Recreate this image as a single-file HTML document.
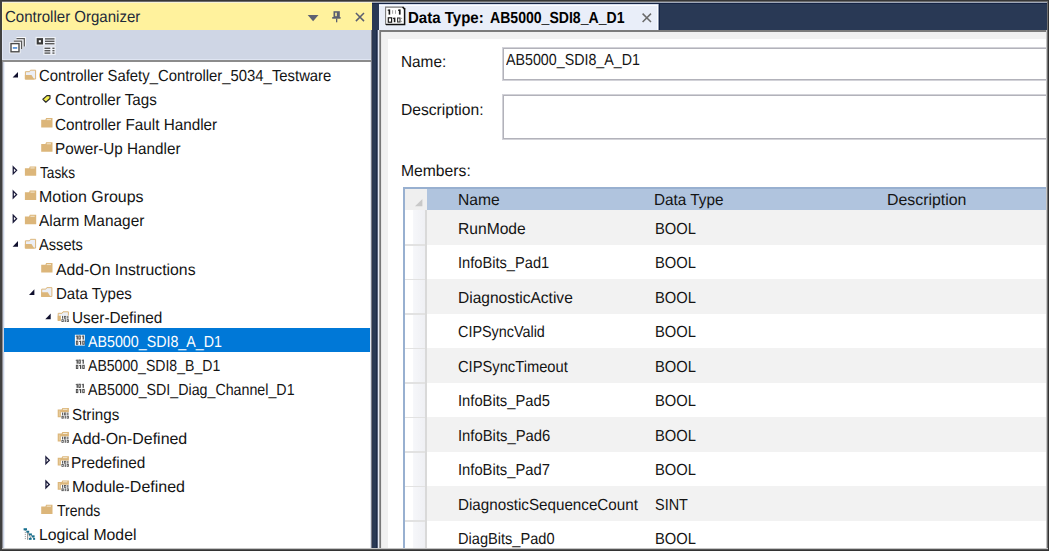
<!DOCTYPE html>
<html><head><meta charset="utf-8">
<style>
*{margin:0;padding:0;box-sizing:border-box}
html,body{width:1049px;height:551px;overflow:hidden;background:#2e2e2e}
body{position:relative;font-family:"Liberation Sans",sans-serif;font-size:15px;color:#1e1e1e}
.abs{position:absolute}
.tx{position:absolute;white-space:pre;line-height:1;transform-origin:0 0;text-rendering:geometricPrecision;font-family:"Liberation Sans",sans-serif}
</style></head><body>
<!-- left panel: title -->
<div class="abs" style="left:2px;top:2px;width:370px;height:1px;background:#f6f2d8"></div>
<div class="abs" style="left:2px;top:3px;width:370px;height:27px;background:#fff29d"></div>
<svg class="abs" style="left:0;top:0" width="372" height="60" viewBox="0 0 372 60">
 <path d="M307.7 15H318.5L313.1 21.2z" fill="#5d6172"/>
 <rect x="333.5" y="11.2" width="6.3" height="6.2" fill="#5b5f70"/>
 <rect x="335.2" y="12.7" width="1.6" height="3.5" fill="#fff29d"/>
 <rect x="332.2" y="17" width="8.4" height="1.7" fill="#5b5f70"/>
 <rect x="336" y="18.5" width="1.3" height="3.8" fill="#5b5f70"/>
 <path d="M355.9 13L364 21.1M364 13L355.9 21.1" stroke="#5b5f70" stroke-width="1.5"/>
</svg>
<!-- toolbar -->
<div class="abs" style="left:2px;top:30px;width:370px;height:29px;background:#cfd6e5"></div>
<div class="abs" style="left:2px;top:59px;width:370px;height:1px;background:#dfe5f2"></div>
<div class="abs" style="left:2px;top:60px;width:370px;height:2px;background:#8c8c8c"></div>
<svg class="abs" style="left:0;top:30px" width="62" height="30" viewBox="0 30 62 30">
 <g fill="none" stroke="#fff" stroke-width="3" opacity="0.9"><path d="M16.5 38.6H24.3V46.4"/><path d="M13.8 41.2H21.6V49"/><rect x="11" y="43.6" width="8" height="8.2"/></g>
 <path d="M16.5 38.6H24.3V46.4" fill="none" stroke="#5a5a5a" stroke-width="1.3"/>
 <path d="M13.8 41.2H21.6V49" fill="none" stroke="#5a5a5a" stroke-width="1.3"/>
 <rect x="11" y="43.6" width="8" height="8.2" fill="#fff" stroke="#4a4a4a" stroke-width="1.4"/>
 <rect x="12.8" y="47.2" width="4.4" height="1.5" fill="#3a7fd0"/>
 <g fill="none" stroke="#eef1f7" stroke-width="2.4"><rect x="36.7" y="38.1" width="6.3" height="6.4"/><rect x="45" y="38.2" width="9.5" height="6.2"/><rect x="44.5" y="47.6" width="10" height="6.2"/></g>
 <rect x="36.7" y="38.1" width="6.3" height="6.4" fill="#eef1f7"/><rect x="45" y="38.2" width="9.5" height="6.2" fill="#eef1f7"/><rect x="44.5" y="47.6" width="10" height="6.2" fill="#eef1f7"/>
 <rect x="36.7" y="38.1" width="6.3" height="6.4" fill="#3a3a3a"/>
 <rect x="38.8" y="40.2" width="2.1" height="2.1" fill="#fff"/>
 <g fill="#5a5a5a">
  <rect x="45" y="38.2" width="9.5" height="1.4"/><rect x="45" y="40.6" width="9.5" height="1.4"/><rect x="45" y="43" width="9.5" height="1.4"/>
  <rect x="44.5" y="47.6" width="5.8" height="1.4"/><rect x="52.4" y="47.6" width="2.1" height="1.4"/>
  <rect x="44.5" y="50" width="5.8" height="1.4"/><rect x="52.4" y="50" width="2.1" height="1.4"/>
  <rect x="44.5" y="52.4" width="5.8" height="1.4"/><rect x="52.4" y="52.4" width="2.1" height="1.4"/>
 </g>
</svg>
<!-- tree -->
<div class="abs" style="left:2px;top:62px;width:369px;height:487px;background:#fff"></div>
<div class="abs" style="left:4px;top:328px;width:366px;height:24px;background:#0078d7"></div>
<svg class="abs" style="left:0;top:0" width="372" height="551" viewBox="0 0 372 551"><path d="M18.00 71.90V77.60H12.60z" fill="#10102e"/><path d="M25.40 79.00V71.70H29.50L30.50 70.20H35.60V79.00z" fill="#eceff6" stroke="#dcb67a" stroke-width="1"/><path d="M24.90 74.90H31.50L34.30 79.50H24.90z" fill="#dcb67a"/><path d="M46.90 95.66L50.00 95.66L50.00 98.46L45.80 102.26L42.90 99.26z" fill="#f6f04e" stroke="#2c2c2c" stroke-width="1.15" stroke-linejoin="round"/><path d="M41.20 119.82H45.40L46.10 118.12H52.50V127.52H41.20z" fill="#dcb67a"/><rect x="46.70" y="119.12" width="4.3" height="1" fill="#f3e8d2"/><path d="M41.20 143.98H45.40L46.10 142.28H52.50V151.68H41.20z" fill="#dcb67a"/><rect x="46.70" y="143.28" width="4.3" height="1" fill="#f3e8d2"/><path d="M13.25 166.94L16.60 170.34L13.25 173.74z" fill="none" stroke="#1a1a3a" stroke-width="1.3" stroke-linejoin="miter"/><path d="M24.90 168.14H29.10L29.80 166.44H36.20V175.84H24.90z" fill="#dcb67a"/><rect x="30.40" y="167.44" width="4.3" height="1" fill="#f3e8d2"/><path d="M13.25 191.10L16.60 194.50L13.25 197.90z" fill="none" stroke="#1a1a3a" stroke-width="1.3" stroke-linejoin="miter"/><path d="M24.90 192.30H29.10L29.80 190.60H36.20V200.00H24.90z" fill="#dcb67a"/><rect x="30.40" y="191.60" width="4.3" height="1" fill="#f3e8d2"/><path d="M13.25 215.26L16.60 218.66L13.25 222.06z" fill="none" stroke="#1a1a3a" stroke-width="1.3" stroke-linejoin="miter"/><path d="M24.90 216.46H29.10L29.80 214.76H36.20V224.16H24.90z" fill="#dcb67a"/><rect x="30.40" y="215.76" width="4.3" height="1" fill="#f3e8d2"/><path d="M18.00 241.02V246.72H12.60z" fill="#10102e"/><path d="M25.40 248.12V240.82H29.50L30.50 239.32H35.60V248.12z" fill="#eceff6" stroke="#dcb67a" stroke-width="1"/><path d="M24.90 244.02H31.50L34.30 248.62H24.90z" fill="#dcb67a"/><path d="M41.20 264.78H45.40L46.10 263.08H52.50V272.48H41.20z" fill="#dcb67a"/><rect x="46.70" y="264.08" width="4.3" height="1" fill="#f3e8d2"/><path d="M34.40 289.34V295.04H29.00z" fill="#10102e"/><path d="M41.70 296.44V289.14H45.80L46.80 287.64H51.90V296.44z" fill="#eceff6" stroke="#dcb67a" stroke-width="1"/><path d="M41.20 292.34H47.80L50.60 296.94H41.20z" fill="#dcb67a"/><path d="M50.70 313.50V319.20H45.30z" fill="#10102e"/><path d="M58.20 320.30V313.30H62.10L63.00 311.80H68.40V316.30" fill="#eceff6" stroke="#dcb67a" stroke-width="1"/><path d="M57.70 315.80H61.20V320.80L58.90 321.10H57.70z" fill="#dcb67a"/><rect x="60.90" y="315.60" width="8.2" height="6.6" fill="#fff"/><rect x="62.10" y="315.90" width="1.1" height="2.8" fill="#505050"/><rect x="64.50" y="316.30" width="1.4" height="2.0" fill="none" stroke="#505050" stroke-width="0.8"/><rect x="67.30" y="315.90" width="1.1" height="2.8" fill="#505050"/><rect x="61.90" y="319.60" width="1.4" height="2.0" fill="none" stroke="#505050" stroke-width="0.8"/><rect x="64.70" y="319.20" width="1.1" height="2.8" fill="#505050"/><rect x="67.10" y="319.60" width="1.4" height="2.0" fill="none" stroke="#505050" stroke-width="0.8"/><rect x="74.9" y="334.76" width="9.9" height="10.8" fill="#fff"/><rect x="76.60" y="335.46" width="1.25" height="4.1" fill="#484848"/><rect x="75.80" y="335.66" width="0.9" height="1.1" fill="#484848"/><rect x="78.85" y="335.91" width="1.45" height="3.2" fill="none" stroke="#484848" stroke-width="0.95"/><rect x="82.60" y="335.46" width="1.25" height="4.1" fill="#484848"/><rect x="81.80" y="335.66" width="0.9" height="1.1" fill="#484848"/><rect x="76.35" y="341.11" width="1.45" height="3.2" fill="none" stroke="#484848" stroke-width="0.95"/><rect x="80.00" y="340.66" width="1.25" height="4.1" fill="#484848"/><rect x="79.20" y="340.86" width="0.9" height="1.1" fill="#484848"/><rect x="82.75" y="341.11" width="1.45" height="3.2" fill="none" stroke="#484848" stroke-width="0.95"/><rect x="76.60" y="359.62" width="1.25" height="4.1" fill="#484848"/><rect x="75.80" y="359.82" width="0.9" height="1.1" fill="#484848"/><rect x="78.85" y="360.07" width="1.45" height="3.2" fill="none" stroke="#484848" stroke-width="0.95"/><rect x="82.60" y="359.62" width="1.25" height="4.1" fill="#484848"/><rect x="81.80" y="359.82" width="0.9" height="1.1" fill="#484848"/><rect x="76.35" y="365.27" width="1.45" height="3.2" fill="none" stroke="#484848" stroke-width="0.95"/><rect x="80.00" y="364.82" width="1.25" height="4.1" fill="#484848"/><rect x="79.20" y="365.02" width="0.9" height="1.1" fill="#484848"/><rect x="82.75" y="365.27" width="1.45" height="3.2" fill="none" stroke="#484848" stroke-width="0.95"/><rect x="76.60" y="383.78" width="1.25" height="4.1" fill="#484848"/><rect x="75.80" y="383.98" width="0.9" height="1.1" fill="#484848"/><rect x="78.85" y="384.23" width="1.45" height="3.2" fill="none" stroke="#484848" stroke-width="0.95"/><rect x="82.60" y="383.78" width="1.25" height="4.1" fill="#484848"/><rect x="81.80" y="383.98" width="0.9" height="1.1" fill="#484848"/><rect x="76.35" y="389.43" width="1.45" height="3.2" fill="none" stroke="#484848" stroke-width="0.95"/><rect x="80.00" y="388.98" width="1.25" height="4.1" fill="#484848"/><rect x="79.20" y="389.18" width="0.9" height="1.1" fill="#484848"/><rect x="82.75" y="389.43" width="1.45" height="3.2" fill="none" stroke="#484848" stroke-width="0.95"/><path d="M57.70 409.44H61.60L62.40 407.94H68.90V417.24H57.70z" fill="#dcb67a"/><rect x="62.90" y="408.84" width="4.5" height="1" fill="#f3e8d2"/><rect x="58.80" y="410.54" width="1.4" height="5.6" fill="#e6cb9c"/><rect x="60.90" y="412.24" width="8.2" height="6.6" fill="#fff"/><rect x="62.10" y="412.54" width="1.1" height="2.8" fill="#505050"/><rect x="64.50" y="412.94" width="1.4" height="2.0" fill="none" stroke="#505050" stroke-width="0.8"/><rect x="67.30" y="412.54" width="1.1" height="2.8" fill="#505050"/><rect x="61.90" y="416.24" width="1.4" height="2.0" fill="none" stroke="#505050" stroke-width="0.8"/><rect x="64.70" y="415.84" width="1.1" height="2.8" fill="#505050"/><rect x="67.10" y="416.24" width="1.4" height="2.0" fill="none" stroke="#505050" stroke-width="0.8"/><path d="M57.70 433.60H61.60L62.40 432.10H68.90V441.40H57.70z" fill="#dcb67a"/><rect x="62.90" y="433.00" width="4.5" height="1" fill="#f3e8d2"/><rect x="58.80" y="434.70" width="1.4" height="5.6" fill="#e6cb9c"/><rect x="60.90" y="436.40" width="8.2" height="6.6" fill="#fff"/><rect x="62.10" y="436.70" width="1.1" height="2.8" fill="#505050"/><rect x="64.50" y="437.10" width="1.4" height="2.0" fill="none" stroke="#505050" stroke-width="0.8"/><rect x="67.30" y="436.70" width="1.1" height="2.8" fill="#505050"/><rect x="61.90" y="440.40" width="1.4" height="2.0" fill="none" stroke="#505050" stroke-width="0.8"/><rect x="64.70" y="440.00" width="1.1" height="2.8" fill="#505050"/><rect x="67.10" y="440.40" width="1.4" height="2.0" fill="none" stroke="#505050" stroke-width="0.8"/><path d="M45.95 456.86L49.30 460.26L45.95 463.66z" fill="none" stroke="#1a1a3a" stroke-width="1.3" stroke-linejoin="miter"/><path d="M57.70 457.76H61.60L62.40 456.26H68.90V465.56H57.70z" fill="#dcb67a"/><rect x="62.90" y="457.16" width="4.5" height="1" fill="#f3e8d2"/><rect x="58.80" y="458.86" width="1.4" height="5.6" fill="#e6cb9c"/><rect x="60.90" y="460.56" width="8.2" height="6.6" fill="#fff"/><rect x="62.10" y="460.86" width="1.1" height="2.8" fill="#505050"/><rect x="64.50" y="461.26" width="1.4" height="2.0" fill="none" stroke="#505050" stroke-width="0.8"/><rect x="67.30" y="460.86" width="1.1" height="2.8" fill="#505050"/><rect x="61.90" y="464.56" width="1.4" height="2.0" fill="none" stroke="#505050" stroke-width="0.8"/><rect x="64.70" y="464.16" width="1.1" height="2.8" fill="#505050"/><rect x="67.10" y="464.56" width="1.4" height="2.0" fill="none" stroke="#505050" stroke-width="0.8"/><path d="M45.95 481.02L49.30 484.42L45.95 487.82z" fill="none" stroke="#1a1a3a" stroke-width="1.3" stroke-linejoin="miter"/><path d="M57.70 481.92H61.60L62.40 480.42H68.90V489.72H57.70z" fill="#dcb67a"/><rect x="62.90" y="481.32" width="4.5" height="1" fill="#f3e8d2"/><rect x="58.80" y="483.02" width="1.4" height="5.6" fill="#e6cb9c"/><rect x="60.90" y="484.72" width="8.2" height="6.6" fill="#fff"/><rect x="62.10" y="485.02" width="1.1" height="2.8" fill="#505050"/><rect x="64.50" y="485.42" width="1.4" height="2.0" fill="none" stroke="#505050" stroke-width="0.8"/><rect x="67.30" y="485.02" width="1.1" height="2.8" fill="#505050"/><rect x="61.90" y="488.72" width="1.4" height="2.0" fill="none" stroke="#505050" stroke-width="0.8"/><rect x="64.70" y="488.32" width="1.1" height="2.8" fill="#505050"/><rect x="67.10" y="488.72" width="1.4" height="2.0" fill="none" stroke="#505050" stroke-width="0.8"/><path d="M41.20 506.38H45.40L46.10 504.68H52.50V514.08H41.20z" fill="#dcb67a"/><rect x="46.70" y="505.68" width="4.3" height="1" fill="#f3e8d2"/><path d="M25.3 530.04V540.04" stroke="#8a8a8a" stroke-width="0.9" stroke-dasharray="1.1 0.9"/><rect x="27.00" y="531.54" width="1.20" height="8.30" fill="#9a9a9a"/><path d="M28 532.04L31 538.54M31 535.00L34 538.54" stroke="#8a8a8a" stroke-width="0.9"/><rect x="23.60" y="528.24" width="3.40" height="2.10" fill="#17708f"/><rect x="26.30" y="530.74" width="2.90" height="1.90" fill="#17708f"/><rect x="28.80" y="533.44" width="3.10" height="1.90" fill="#17708f"/><rect x="31.70" y="535.34" width="2.90" height="2.00" fill="#17708f"/><rect x="28.90" y="537.84" width="2.70" height="2.00" fill="#17708f"/><rect x="33.10" y="537.84" width="2.00" height="2.00" fill="#17708f"/></svg>
<!-- navy -->
<div class="abs" style="left:372px;top:2px;width:675px;height:547px;background:#293955"></div>
<div class="abs" style="left:372px;top:2px;width:675px;height:1px;background:#a0a8b8"></div>
<div class="abs" style="left:372px;top:3px;width:675px;height:1px;background:#152444"></div>
<div class="abs" style="left:370px;top:62px;width:1px;height:487px;background:#dfe5f2"></div>
<div class="abs" style="left:371px;top:30px;width:1px;height:519px;background:#7a7d88"></div>
<div class="abs" style="left:372px;top:30px;width:1px;height:519px;background:#2a3650"></div>
<div class="abs" style="left:376px;top:30px;width:1px;height:519px;background:#1d2b4a"></div>
<div class="abs" style="left:377px;top:30px;width:1px;height:519px;background:#56627a"></div>
<div class="abs" style="left:659px;top:4px;width:1px;height:26px;background:#152444"></div>
<!-- tab -->
<div class="abs" style="left:379px;top:4px;width:279px;height:26px;background:#e9eef9"></div>
<div class="abs" style="left:379px;top:4px;width:279px;height:1px;background:#d8e0f0"></div>
<div class="abs" style="left:379px;top:5px;width:279px;height:1px;background:#fbfcff"></div>
<div class="abs" style="left:657px;top:5px;width:1px;height:25px;background:#fbfcff"></div>
<div class="abs" style="left:658px;top:4px;width:1px;height:26px;background:#8f9ab0"></div>
<svg class="abs" style="left:380px;top:4px" width="30" height="26" viewBox="380 4 30 26">
 <rect x="385.6" y="7" width="19" height="18" fill="#fff"/>
 <path d="M385.6 25V7.1H403.3" fill="none" stroke="#7a7a7a" stroke-width="1.1"/>
 <path d="M386 24.6H404.6V8.6" fill="none" stroke="#111" stroke-width="1.5"/>
 <path d="M402.6 7L405 9.4" stroke="#111" stroke-width="1.6"/>
 <g fill="#1a1a1a">
  <rect x="388.6" y="9.4" width="1.6" height="5.2"/><rect x="387.7" y="9.6" width="1.2" height="1.2"/>
  <rect x="398.9" y="9.4" width="1.7" height="5.2"/><rect x="398" y="9.6" width="1.2" height="1.2"/>
  <rect x="388.3" y="17.8" width="3.3" height="4.4" fill="none" stroke="#1a1a1a" stroke-width="1.2"/>
  <rect x="393.8" y="17.6" width="1.6" height="4.6"/><rect x="392.9" y="17.8" width="1.1" height="1.1"/>
  <rect x="397.6" y="18" width="2.4" height="4" fill="none" stroke="#333" stroke-width="1.1"/>
 </g>
 <g fill="#9a9a9a">
  <rect x="392.2" y="10.2" width="0.9" height="3.6"/><rect x="395" y="10.2" width="0.9" height="3.6"/>
  <rect x="401.2" y="17.8" width="0.9" height="1.2"/><rect x="401.2" y="20.8" width="0.9" height="1.3"/>
 </g>
</svg>
<svg class="abs" style="left:636px;top:8px" width="20" height="20" viewBox="636 8 20 20">
 <path d="M642.6 13.6L651 22M651 13.6L642.6 22" stroke="#6a6a6a" stroke-width="1.5"/>
</svg>
<!-- content -->
<div class="abs" style="left:378px;top:30px;width:1px;height:519px;background:#e4e9f7"></div>
<div class="abs" style="left:379px;top:30px;width:668px;height:2px;background:#7c7c7c"></div>
<div class="abs" style="left:379px;top:30px;width:1px;height:519px;background:#9a9a9a"></div><div class="abs" style="left:380px;top:30px;width:1px;height:519px;background:#787878"></div><div class="abs" style="left:381px;top:32px;width:1px;height:517px;background:#e8e8e8"></div>
<div class="abs" style="left:382px;top:32px;width:665px;height:517px;background:#f1f1f1"></div>
<div class="abs" style="left:388px;top:39px;width:659px;height:510px;background:#fff"></div>
<div class="abs" style="left:502px;top:46.5px;width:560px;height:34.5px;border:1px solid #d2d2d8;box-shadow:inset 0 0 0 1px #b2b2ba;background:#fff"></div>
<div class="abs" style="left:502px;top:93.7px;width:560px;height:46.3px;border:1px solid #d2d2d8;box-shadow:inset 0 0 0 1px #b2b2ba;background:#fff"></div>
<!-- grid -->
<div class="abs" style="left:403px;top:187px;width:644px;height:1.5px;background:#98b0d0"></div>
<div class="abs" style="left:403px;top:187px;width:1.5px;height:362px;background:#98b0d0"></div>
<div class="abs" style="left:404.5px;top:188.5px;width:22.5px;height:21.6px;background:#efefef"></div>
<svg class="abs" style="left:404px;top:188px" width="23" height="23" viewBox="404 188 23 23"><path d="M422.4 199V206.2H415z" fill="#c8c8c8"/></svg>
<div class="abs" style="left:427px;top:188.5px;width:620px;height:21.6px;background:#b0c4de"></div>
<div class="abs" style="left:404.5px;top:210.3px;width:8.5px;height:338.7px;background:#fff"></div>
<div class="abs" style="left:413px;top:210.3px;width:12px;height:338.7px;background:linear-gradient(90deg,#f6f7fa,#eff0f4)"></div>
<div class="abs" style="left:425px;top:210.3px;width:2px;height:338.7px;background:#d9d9d9"></div>
<div class="abs" style="left:427px;top:210.10px;width:620px;height:34.5px;background:#f2f2f2"></div>
<div class="abs" style="left:404.5px;top:244.10px;width:20.5px;height:1.6px;background:#e2e2e2"></div>
<div class="abs" style="left:427px;top:244.60px;width:620px;height:34.5px;background:#ffffff"></div>
<div class="abs" style="left:404.5px;top:278.60px;width:20.5px;height:1.6px;background:#e2e2e2"></div>
<div class="abs" style="left:427px;top:279.10px;width:620px;height:34.5px;background:#f2f2f2"></div>
<div class="abs" style="left:404.5px;top:313.10px;width:20.5px;height:1.6px;background:#e2e2e2"></div>
<div class="abs" style="left:427px;top:313.60px;width:620px;height:34.5px;background:#ffffff"></div>
<div class="abs" style="left:404.5px;top:347.60px;width:20.5px;height:1.6px;background:#e2e2e2"></div>
<div class="abs" style="left:427px;top:348.10px;width:620px;height:34.5px;background:#f2f2f2"></div>
<div class="abs" style="left:404.5px;top:382.10px;width:20.5px;height:1.6px;background:#e2e2e2"></div>
<div class="abs" style="left:427px;top:382.60px;width:620px;height:34.5px;background:#ffffff"></div>
<div class="abs" style="left:404.5px;top:416.60px;width:20.5px;height:1.6px;background:#e2e2e2"></div>
<div class="abs" style="left:427px;top:417.10px;width:620px;height:34.5px;background:#f2f2f2"></div>
<div class="abs" style="left:404.5px;top:451.10px;width:20.5px;height:1.6px;background:#e2e2e2"></div>
<div class="abs" style="left:427px;top:451.60px;width:620px;height:34.5px;background:#ffffff"></div>
<div class="abs" style="left:404.5px;top:485.60px;width:20.5px;height:1.6px;background:#e2e2e2"></div>
<div class="abs" style="left:427px;top:486.10px;width:620px;height:34.5px;background:#f2f2f2"></div>
<div class="abs" style="left:404.5px;top:520.10px;width:20.5px;height:1.6px;background:#e2e2e2"></div>
<div class="abs" style="left:427px;top:520.60px;width:620px;height:34.5px;background:#ffffff"></div>
<div class="abs" style="left:404.5px;top:554.60px;width:20.5px;height:1.6px;background:#e2e2e2"></div>
<div id="t0" class="tx" style="left:4.51px;top:10.00px;font-size:16px;font-weight:400;color:#1e2a3a;transform:scaleX(0.9390)">Controller Organizer</div>
<div id="t1" class="tx" style="left:38.51px;top:69.30px;font-size:16px;font-weight:400;color:#141414;transform:scaleX(0.9285)">Controller Safety_Controller_5034_Testware</div>
<div id="t2" class="tx" style="left:55.47px;top:93.46px;font-size:16px;font-weight:400;color:#141414;transform:scaleX(0.9481)">Controller Tags</div>
<div id="t3" class="tx" style="left:55.49px;top:117.62px;font-size:16px;font-weight:400;color:#141414;transform:scaleX(0.9545)">Controller Fault Handler</div>
<div id="t4" class="tx" style="left:55.35px;top:141.78px;font-size:16px;font-weight:400;color:#141414;transform:scaleX(0.9537)">Power-Up Handler</div>
<div id="t5" class="tx" style="left:39.76px;top:165.94px;font-size:16px;font-weight:400;color:#141414;transform:scaleX(0.8553)">Tasks</div>
<div id="t6" class="tx" style="left:39.02px;top:190.10px;font-size:16px;font-weight:400;color:#141414;transform:scaleX(0.9966)">Motion Groups</div>
<div id="t7" class="tx" style="left:39.20px;top:214.26px;font-size:16px;font-weight:400;color:#141414;transform:scaleX(0.9633)">Alarm Manager</div>
<div id="t8" class="tx" style="left:39.39px;top:238.42px;font-size:16px;font-weight:400;color:#141414;transform:scaleX(0.9148)">Assets</div>
<div id="t9" class="tx" style="left:56.17px;top:262.58px;font-size:16px;font-weight:400;color:#141414;transform:scaleX(0.9868)">Add-On Instructions</div>
<div id="t10" class="tx" style="left:55.50px;top:286.74px;font-size:16px;font-weight:400;color:#141414;transform:scaleX(0.9404)">Data Types</div>
<div id="t11" class="tx" style="left:71.97px;top:310.90px;font-size:16px;font-weight:400;color:#141414;transform:scaleX(0.9588)">User-Defined</div>
<div id="t12" class="tx" style="left:88.39px;top:335.06px;font-size:16px;font-weight:400;color:#ffffff;transform:scaleX(0.8910)">AB5000_SDI8_A_D1</div>
<div id="t13" class="tx" style="left:88.38px;top:359.22px;font-size:16px;font-weight:400;color:#141414;transform:scaleX(0.8796)">AB5000_SDI8_B_D1</div>
<div id="t14" class="tx" style="left:88.39px;top:383.38px;font-size:16px;font-weight:400;color:#141414;transform:scaleX(0.8897)">AB5000_SDI_Diag_Channel_D1</div>
<div id="t15" class="tx" style="left:72.10px;top:407.54px;font-size:16px;font-weight:400;color:#141414;transform:scaleX(0.9501)">Strings</div>
<div id="t16" class="tx" style="left:72.17px;top:431.70px;font-size:16px;font-weight:400;color:#141414;transform:scaleX(0.9967)">Add-On-Defined</div>
<div id="t17" class="tx" style="left:71.34px;top:455.86px;font-size:16px;font-weight:400;color:#141414;transform:scaleX(0.9610)">Predefined</div>
<div id="t18" class="tx" style="left:71.88px;top:480.02px;font-size:16px;font-weight:400;color:#141414;transform:scaleX(1.0003)">Module-Defined</div>
<div id="t19" class="tx" style="left:56.60px;top:504.18px;font-size:16px;font-weight:400;color:#141414;transform:scaleX(0.8784)">Trends</div>
<div id="t20" class="tx" style="left:39.02px;top:528.34px;font-size:16px;font-weight:400;color:#141414;transform:scaleX(0.9867)">Logical Model</div>
<div id="t21" class="tx" style="left:408.32px;top:10.60px;font-size:16px;font-weight:700;color:#000000;transform:scaleX(0.9385)">Data Type:</div>
<div id="t22" class="tx" style="left:490.18px;top:10.60px;font-size:16px;font-weight:700;color:#000000;transform:scaleX(0.8790)">AB5000_SDI8_A_D1</div>
<div id="t23" class="tx" style="left:401.33px;top:54.50px;font-size:16px;font-weight:400;color:#141414;transform:scaleX(0.9589)">Name:</div>
<div id="t24" class="tx" style="left:401.21px;top:102.60px;font-size:16px;font-weight:400;color:#141414;transform:scaleX(0.9769)">Description:</div>
<div id="t25" class="tx" style="left:401.13px;top:164.00px;font-size:16px;font-weight:400;color:#141414;transform:scaleX(0.9806)">Members:</div>
<div id="t26" class="tx" style="left:506.39px;top:52.80px;font-size:16px;font-weight:400;color:#141414;transform:scaleX(0.8910)">AB5000_SDI8_A_D1</div>
<div id="t27" class="tx" style="left:458.07px;top:193.30px;font-size:16px;font-weight:400;color:#141414;transform:scaleX(0.9784)">Name</div>
<div id="t28" class="tx" style="left:654.35px;top:193.30px;font-size:16px;font-weight:400;color:#141414;transform:scaleX(0.9574)">Data Type</div>
<div id="t29" class="tx" style="left:887.02px;top:193.30px;font-size:16px;font-weight:400;color:#141414;transform:scaleX(0.9927)">Description</div>
<div id="t30" class="tx" style="left:458.22px;top:221.80px;font-size:16px;font-weight:400;color:#141414;transform:scaleX(0.9764)">RunMode</div>
<div id="t31" class="tx" style="left:458.35px;top:256.28px;font-size:16px;font-weight:400;color:#141414;transform:scaleX(0.9155)">InfoBits_Pad1</div>
<div id="t32" class="tx" style="left:458.27px;top:290.76px;font-size:16px;font-weight:400;color:#141414;transform:scaleX(0.9704)">DiagnosticActive</div>
<div id="t33" class="tx" style="left:458.41px;top:325.24px;font-size:16px;font-weight:400;color:#141414;transform:scaleX(0.8990)">CIPSyncValid</div>
<div id="t34" class="tx" style="left:458.46px;top:359.72px;font-size:16px;font-weight:400;color:#141414;transform:scaleX(0.9190)">CIPSyncTimeout</div>
<div id="t35" class="tx" style="left:458.28px;top:394.20px;font-size:16px;font-weight:400;color:#141414;transform:scaleX(0.9223)">InfoBits_Pad5</div>
<div id="t36" class="tx" style="left:458.28px;top:428.68px;font-size:16px;font-weight:400;color:#141414;transform:scaleX(0.9267)">InfoBits_Pad6</div>
<div id="t37" class="tx" style="left:458.28px;top:463.16px;font-size:16px;font-weight:400;color:#141414;transform:scaleX(0.9225)">InfoBits_Pad7</div>
<div id="t38" class="tx" style="left:458.35px;top:497.64px;font-size:16px;font-weight:400;color:#141414;transform:scaleX(0.9496)">DiagnosticSequenceCount</div>
<div id="t39" class="tx" style="left:457.61px;top:532.12px;font-size:16px;font-weight:400;color:#141414;transform:scaleX(0.9122)">DiagBits_Pad0</div>
<div id="t40" class="tx" style="left:654.59px;top:221.80px;font-size:16px;font-weight:400;color:#141414;transform:scaleX(0.9206)">BOOL</div>
<div id="t41" class="tx" style="left:654.59px;top:256.28px;font-size:16px;font-weight:400;color:#141414;transform:scaleX(0.9206)">BOOL</div>
<div id="t42" class="tx" style="left:654.59px;top:290.76px;font-size:16px;font-weight:400;color:#141414;transform:scaleX(0.9206)">BOOL</div>
<div id="t43" class="tx" style="left:654.59px;top:325.24px;font-size:16px;font-weight:400;color:#141414;transform:scaleX(0.9206)">BOOL</div>
<div id="t44" class="tx" style="left:654.59px;top:359.72px;font-size:16px;font-weight:400;color:#141414;transform:scaleX(0.9206)">BOOL</div>
<div id="t45" class="tx" style="left:654.59px;top:394.20px;font-size:16px;font-weight:400;color:#141414;transform:scaleX(0.9206)">BOOL</div>
<div id="t46" class="tx" style="left:654.59px;top:428.68px;font-size:16px;font-weight:400;color:#141414;transform:scaleX(0.9206)">BOOL</div>
<div id="t47" class="tx" style="left:654.59px;top:463.16px;font-size:16px;font-weight:400;color:#141414;transform:scaleX(0.9206)">BOOL</div>
<div id="t48" class="tx" style="left:655.22px;top:497.64px;font-size:16px;font-weight:400;color:#141414;transform:scaleX(0.9028)">SINT</div>
<div id="t49" class="tx" style="left:654.59px;top:532.12px;font-size:16px;font-weight:400;color:#141414;transform:scaleX(0.9206)">BOOL</div>
<!-- frame -->
<div class="abs" style="left:0;top:0;width:1049px;height:1px;background:#363636"></div>
<div class="abs" style="left:0;top:1px;width:1049px;height:1px;background:#6c6c6c"></div>
<div class="abs" style="left:0;top:550px;width:1049px;height:1px;background:#333"></div>
<div class="abs" style="left:0;top:549px;width:1049px;height:1px;background:#555"></div>
<div class="abs" style="left:0;top:548px;width:1049px;height:1px;background:#c4c4c4"></div>
<div class="abs" style="left:0;top:0;width:2px;height:551px;background:#404040"></div>
<div class="abs" style="left:2px;top:62px;width:1px;height:486px;background:#8c8c92"></div><div class="abs" style="left:2px;top:3px;width:1px;height:27px;background:#fff8b8"></div><div class="abs" style="left:2px;top:30px;width:1px;height:29px;background:#dfe5f4"></div>
<div class="abs" style="left:3px;top:62px;width:1px;height:486px;background:#cbd3e2"></div>
<div class="abs" style="left:4px;top:62px;width:1px;height:266px;background:#eef2fa"></div>
<div class="abs" style="left:4px;top:352px;width:1px;height:196px;background:#eef2fa"></div>
<div class="abs" style="left:1048px;top:0;width:1px;height:551px;background:#333"></div>
<div class="abs" style="left:1047px;top:2px;width:1px;height:546px;background:#707070"></div>
<div class="abs" style="left:1046px;top:30px;width:1px;height:518px;background:#c4c4c4"></div>
</body></html>
